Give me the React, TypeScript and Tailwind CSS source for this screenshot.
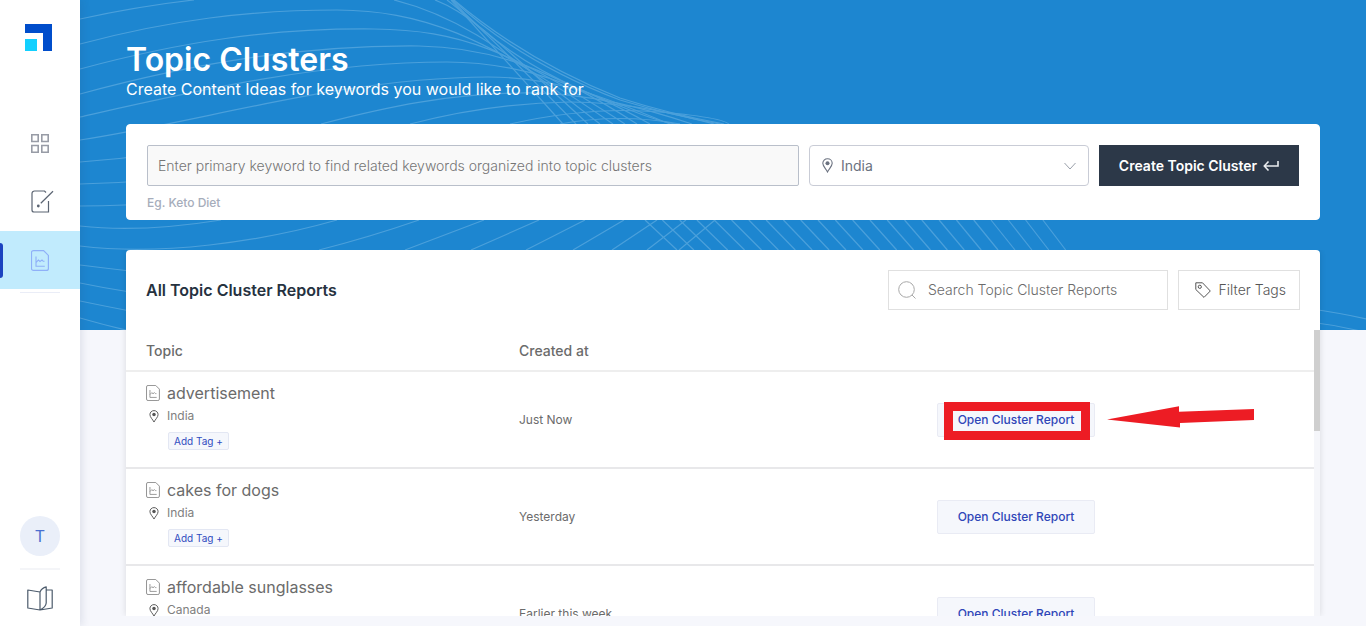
import React from 'react';

interface Report {
  topic: string;
  country: string;
  createdAt: string;
  highlighted?: boolean;
}

const reports: Report[] = [
  { topic: 'advertisement', country: 'India', createdAt: 'Just Now', highlighted: true },
  { topic: 'cakes for dogs', country: 'India', createdAt: 'Yesterday' },
  { topic: 'affordable sunglasses', country: 'Canada', createdAt: 'Earlier this week' },
];

const ReportIcon: React.FC<{ className?: string }> = ({ className }) => (
  <svg viewBox="0 0 18 21" fill="none" stroke="currentColor" className={className} aria-hidden="true">
    <path d="M2.5 .6H12.6L17.4 5.4V18.4a2 2 0 0 1-2 2H2.5a2 2 0 0 1-2-2V2.6a2 2 0 0 1 2-2Z" strokeWidth="1.2" />
    <path d="M5 6.6v9.7h8.8M5 12.6l2.4-2.6 1.600 1.500 2-1.500 1.300 1.300h1.200" strokeWidth="1.1" />
  </svg>
);

const PinIcon: React.FC<{ className?: string }> = ({ className }) => (
  <svg viewBox="0 0 11 15" fill="none" className={className} aria-hidden="true">
    <path d="M5.5.7C2.8.7.8 2.7.8 5.3c0 3 3.2 5.5 4.7 8.6 1.5-3.1 4.7-5.6 4.7-8.6C10.2 2.7 8.2.7 5.5.7Z" stroke="currentColor" strokeWidth="1.1" />
    <circle cx="5.5" cy="5.3" r="2" fill="currentColor" />
  </svg>
);

const Waves: React.FC = () => {
  const slanted = Array.from({ length: 24 }, (_, i) => i);

  return (
    <svg viewBox="0 0 1286 330" preserveAspectRatio="xMinYMin slice" className="h-full w-full" fill="none" stroke="#4ba0db" strokeWidth="1.2" aria-hidden="true">
      {/* left side, running into the fan */}
      <path d="M0 19Q60 6 114 0" />
      <path d="M0 44C90 20 170 10 257 10C340 11 400 32 533 124" />
      <path d="M0 69C100 42 190 28 294 29C380 30 430 50 545 124" />
      <path d="M0 94C110 64 220 45 339 46C410 47 470 68 557 124" />
      <path d="M0 117C120 90 240 62 367 62C440 62 500 85 570 124" />
      <path d="M0 140C130 120 260 78 408 77C480 77 530 100 590 124" />
      <path d="M0 162Q80 156 150 142M241 124C310 106 370 94 440 93C510 92 570 110 612 124" />
      <path d="M0 184Q80 182 170 170M330 124Q410 103 490 102C550 102 600 115 634 124" />
      <path d="M430 124Q510 106 580 112T650 126" />
      <path d="M480 124Q540 113 600 124" />
      <path d="M0 206Q90 206 170 190" />
      {/* fan */}
      <path d="M371 0L483 124" />
      <path d="M367 0Q395 20 496 124" />
      <path d="M355 0C385 12 405 28 508 124" />
      <path d="M314 0C370 14 410 38 520 124" />
      <path d="M372 0Q420 54 502 90T600 124" />
      <path d="M373 0Q440 62 540 100Q590 115 640 124" />
      <path d="M374 0Q445 60 540 98Q590 114 644 124" />
      {/* between the cards */}
      <path d="M0 226Q60 233 141 220" />
      <path d="M0 246C80 256 180 242 257 220" />
      <path d="M239 250Q290 237 339 220M325 250L404 220M391 250L459 220M446 250L505 220M493 250L544 220M532 250L577 220M567 250L606 220M599 250L635 220" />
      <path d="M0 265Q24 268 50 271M0 283Q24 288 50 292M0 301Q24 306 50 311M0 318Q24 325 50 331" />
      <path d="M1230 309Q1262 313 1300 322M1230 322Q1255 325 1280 331" />
      {slanted.map((i) => (
        <path key={i} d={`M${565 + i * 17.3} 220L${597 + i * 16.9} 250`} />
      ))}
    </svg>
  );
};

const Sidebar: React.FC = () => (
  <aside className="z-10 flex w-20 shrink-0 flex-col items-center bg-white shadow-[2px_0_8px_rgba(40,60,100,0.12)]">
    <a href="#home" aria-label="Home" className="mt-6 pr-1">
      <svg viewBox="0 0 27 27" className="h-[27px] w-[27px]" aria-hidden="true">
        <path d="M0 0H27V27H18V9H0Z" fill="#004dcb" />
        <path d="M0 15H12V27H0Z" fill="#12d0ff" />
      </svg>
    </a>
    <nav className="mt-16 flex w-full flex-col items-center">
      <a href="#dashboard" aria-label="Dashboard" className="flex h-[58px] w-full items-center justify-center pb-[2px] text-[#989ca6]">
        <svg viewBox="0 0 18 19" className="h-[19px] w-[18px]" fill="none" stroke="currentColor" strokeWidth="1.6" aria-hidden="true">
          <path d="M.8.8H7.2V7.5H.8ZM10.8.8H17.2V7.5H10.8ZM.8 11.5H7.2V18.2H.8ZM10.8 11.5H17.2V18.2H10.8Z" />
        </svg>
      </a>
      <a href="#editor" aria-label="Editor" className="flex h-[58px] w-full items-center justify-center pb-[2px] pl-1 text-[#5b6472]">
        <svg viewBox="0 0 23 23" className="h-[23px] w-[23px]" fill="none" stroke="currentColor" aria-hidden="true">
          <path d="M15 2.5L13.500 1H3.500a2.500 2.500 0 0 0-2.500 2.500V20a2 2 0 0 0 2 2H17.500V11" strokeWidth="1.2" />
          <path d="M22 1.2L9.8 13.3" strokeWidth="1.2" />
          <circle cx="7.3" cy="16" r="1.4" fill="currentColor" stroke="none" />
        </svg>
      </a>
      <a href="#clusters" aria-label="Topic Clusters" aria-current="page" className="flex h-[58px] w-full items-center bg-[#c1ebfd] text-[#8fb0f8]">
        <span className="h-[35px] w-[3px] rounded-r-sm bg-[#1c43c0]" />
        <span className="flex flex-1 justify-center pr-[3px]">
          <ReportIcon className="h-[21px] w-[18px]" />
        </span>
      </a>
    </nav>
    <hr className="mt-[3px] w-10 border-[#eaedf7]" />
    <div className="mt-auto flex flex-col items-center">
      <button type="button" className="h-10 w-10 rounded-full bg-[#eaeff9] text-base text-[#4a6fd0]">T</button>
      <hr className="mt-3 w-10 border-t-2 border-[#f4f5f8]" />
      <a href="#docs" aria-label="Documentation" className="mt-4 mb-[15px] text-[#4b5a6b]">
        <svg viewBox="0 0 26 25" className="h-[25px] w-[26px]" fill="none" stroke="currentColor" strokeWidth="1.2" strokeLinejoin="round" aria-hidden="true">
          <path d="M13 24L.8 22V4L13 6V24C17 22 19 20 19.200 17V.8C16 1.500 14 3.500 13 6M19.200 4H25.200V22L13 24" />
        </svg>
      </a>
    </div>
  </aside>
);

const SearchForm: React.FC = () => (
  <form className="rounded-sm border border-white bg-white px-5 pt-5 pb-[7px]">
    <div className="flex gap-[10px]">
      <input
        id="keyword"
        type="text"
        aria-label="Primary keyword"
        placeholder="Enter primary keyword to find related keywords organized into topic clusters"
        className="h-[41px] min-w-0 flex-1 rounded-xs border border-[#b9bfca] bg-[#f9f9f9] px-[10px] text-sm font-light placeholder:text-[#757575]"
      />
      <div className="flex h-[41px] w-[280px] items-center rounded-sm border border-[#c9ccd6] px-3 text-[#6b7280]">
        <PinIcon className="h-[15px] w-[11px]" />
        <select aria-label="Country" className="flex-1 appearance-none bg-transparent pl-2 text-sm text-[#6b7280]">
          <option>India</option>
          <option>Canada</option>
        </select>
        <svg viewBox="0 0 12 8" className="h-2 w-3" fill="none" stroke="#9aa0aa" aria-hidden="true">
          <path d="M.5 1L6 7L11.5 1" />
        </svg>
      </div>
      <button type="button" className="flex h-[41px] w-[200px] items-center justify-center gap-[6px] bg-[#2c3848] text-sm font-semibold text-white">
        Create Topic Cluster
        <svg viewBox="0 0 16 12" className="h-3 w-4" fill="none" stroke="#e8eaed" strokeWidth="1.6" aria-hidden="true">
          <path d="M15 1V6H1.500M5.500 1.500L1.300 6L5.500 10.500" />
        </svg>
      </button>
    </div>
    <p className="mt-2 text-xs leading-[18px] font-medium text-[#a6adbb]">Eg. Keto Diet</p>
  </form>
);

const ReportRow: React.FC<{ report: Report }> = ({ report }) => (
  <tr className="h-[97px] border-b-2 border-[#e8e8ea]">
    <td className="pt-[11px] pl-5 align-top">
      <div className="flex items-center gap-[7px] text-[#6b6b6b]">
        <ReportIcon className="h-4 w-[14px] text-[#8a8a8a]" />
        <span className="text-base leading-5">{report.topic}</span>
      </div>
      <div className="mt-[3px] flex items-center gap-2 pl-[3px]">
        <PinIcon className="h-[13px] w-[10px] text-[#555555]" />
        <span className="text-xs leading-5 text-[#808080]">{report.country}</span>
      </div>
      <button type="button" className="mt-[6px] ml-[22px] block h-[18px] rounded-xs border border-[#e3e7f3] bg-[#f5f7fc] px-[5px] text-[10px] leading-4 text-[#2f4bc0]">
        Add Tag +
      </button>
    </td>
    <td className="align-middle text-xs text-[#6b6b6b]">{report.createdAt}</td>
    <td className="align-middle">
      <div className="relative w-[158px]">
        <button type="button" className="block h-[34px] w-full rounded-xs border border-[#e9ebf4] bg-[#f5f7fc] text-xs font-medium text-[#2f46b8]">
          Open Cluster Report
        </button>
        {report.highlighted && (
          <>
            <div className="pointer-events-none absolute -top-px left-[7px] h-[38px] w-[146px] border-[9px] border-[#ed1c24]" />
            <svg viewBox="0 0 148 22" className="pointer-events-none absolute top-[3px] left-[170px] h-[22px] w-[148px]" fill="#ed1c24" aria-hidden="true">
              <path d="M0 13.500L72 .3V5.800L147 3V14L73 17V21.500Z" />
            </svg>
          </>
        )}
      </div>
    </td>
  </tr>
);

const ReportList: React.FC = () => (
  <section className="mt-[30px] flex min-h-0 flex-1 flex-col rounded-t-sm bg-white shadow-[0_0_6px_rgba(0,0,0,0.12)] [clip-path:inset(0_-6px)]">
    <div className="flex items-center justify-between p-5">
      <h2 className="text-base font-semibold text-[#26323f]">All Topic Cluster Reports</h2>
      <div className="flex gap-[10px]">
        <label className="flex h-10 w-[280px] items-center gap-3 border border-[#e0e0e0] px-[9px]">
          <svg viewBox="0 0 18 18" className="h-[18px] w-[18px] shrink-0" fill="none" stroke="#a8a8a8" aria-hidden="true">
            <circle cx="8.500" cy="8.500" r="7.800" />
            <path d="M14 14L17.500 17.500" />
          </svg>
          <input type="text" aria-label="Search reports" placeholder="Search Topic Cluster Reports" className="min-w-0 flex-1 text-sm font-light placeholder:text-[#6b6b6b]" />
        </label>
        <button type="button" className="flex h-10 w-[122px] items-center justify-end gap-2 border border-[#e0e0e0] px-[13px] text-sm font-light text-[#555555]">
          <svg viewBox="0 0 16 16" className="h-4 w-4" fill="none" stroke="currentColor" strokeLinejoin="round" aria-hidden="true">
            <path d="M.8.8H7.500L15.300 9L9 15.400L.8 7.500Z" />
            <circle cx="4.800" cy="4.800" r="1.600" />
          </svg>
          Filter Tags
        </button>
      </div>
    </div>
    <div className="flex min-h-0 flex-1">
      <div className="min-w-0 flex-1 overflow-hidden">
        <table className="w-full table-fixed border-collapse text-left">
          <colgroup>
            <col className="w-[393px]" />
            <col className="w-[418px]" />
            <col />
          </colgroup>
          <thead>
            <tr className="h-[41px] border-b-2 border-[#eeeeee] text-sm text-[#6b6b6b]">
              <th scope="col" className="pt-px pl-5 font-medium">Topic</th>
              <th scope="col" className="pt-px font-medium">Created at</th>
              <td />
            </tr>
          </thead>
          <tbody>
            {reports.map((report) => (
              <ReportRow key={report.topic} report={report} />
            ))}
          </tbody>
        </table>
      </div>
      <div className="w-[6px] bg-[#f5f6fa]">
        <div className="h-[101px] bg-[#cfcfcf]" />
      </div>
    </div>
  </section>
);

const App: React.FC = () => {
  return (
    <div className="flex h-screen bg-[#f6f7fc] font-['Inter',sans-serif]">
      <Sidebar />
      <div className="relative flex min-w-0 flex-1 flex-col">
        <div className="absolute inset-x-0 top-0 h-[330px] overflow-hidden bg-[#1d86d0]">
          <Waves />
        </div>
        <main className="relative flex min-h-0 flex-1 flex-col px-[46px] pb-[10px]">
          <header className="pt-[41px] pb-[25px] text-white">
            <h1 className="text-[32px] leading-[38px] font-semibold">Topic Clusters</h1>
            <p className="text-base leading-5">Create Content Ideas for keywords you would like to rank for</p>
          </header>
          <SearchForm />
          <ReportList />
        </main>
      </div>
    </div>
  );
};

export default App;
